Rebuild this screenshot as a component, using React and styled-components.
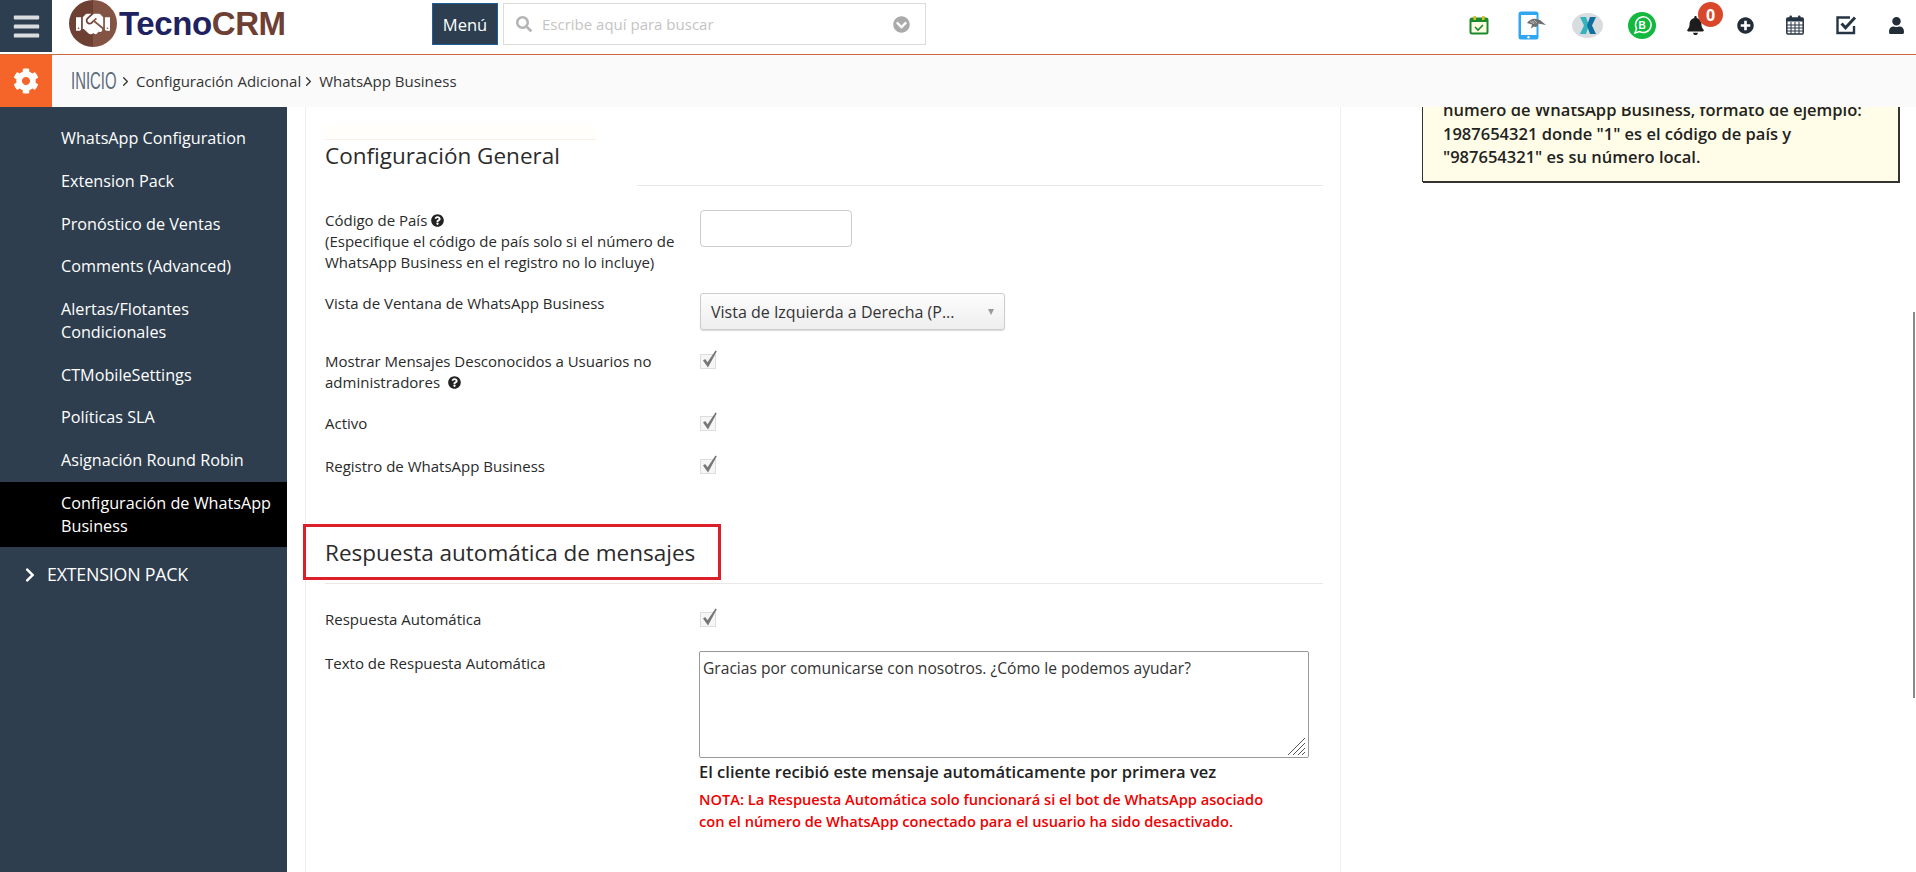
import React from 'react';
import styled, { createGlobalStyle } from 'styled-components';
import {
    FaBars, FaCog, FaSearch, FaChevronCircleDown, FaQuestionCircle, FaBell,
    FaPlusCircle, FaUser, FaChevronRight, FaHandshake,
} from 'react-icons/fa';
import { FiChevronRight } from 'react-icons/fi';

const GlobalStyle = createGlobalStyle`
    html, body {
        margin: 0;
        padding: 0;
        background: #fff;
        font-family: "Open Sans", "Liberation Sans", sans-serif;
        color: #222;
    }
`;

const menuItems = [
    'WhatsApp Configuration',
    'Extension Pack',
    'Pronóstico de Ventas',
    'Comments (Advanced)',
    'Alertas/Flotantes Condicionales',
    'CTMobileSettings',
    'Políticas SLA',
    'Asignación Round Robin',
];

const CalendarCheck = () => (
    <svg width="20" height="20" viewBox="0 0 20 20" fill="none">
        <rect x="1.5" y="3.5" width="17" height="15" rx="1.5" fill="#fdfbe0" stroke="#1b8a2e" strokeWidth="2" />
        <rect x="1.5" y="3.5" width="17" height="3.5" fill="#1b8a2e" />
        <rect x="4.5" y="1" width="2.5" height="4" fill="#d8c021" />
        <rect x="13" y="1" width="2.5" height="4" fill="#d8c021" />
        <path d="M6 12l3 3 5-5" stroke="#1b8a2e" strokeWidth="1.6" />
    </svg>
);

const TabletBird = () => (
    <svg width="29" height="29" viewBox="0 0 29 29" fill="none">
        <rect x="0.5" y="0.5" width="20" height="28" rx="2.5" fill="#2ea6f2" />
        <rect x="3" y="4" width="15.5" height="20" fill="#fff" />
        <circle cx="10.5" cy="26.2" r="1.2" fill="#fff" />
        <path d="M9 12c2-3 6-5 9-4l4 1 6 5-8-1.5c0 3-2 4-4 3l-3 2 1-4-5-1.5z" fill="#6f6f6f" />
        <path d="M12 10.5l4 2M14 9.5l3 3M16 9l3 3" stroke="#ddd" strokeWidth=".7" />
    </svg>
);

const XLogo = () => (
    <svg width="31" height="25" viewBox="0 0 31 25">
        <ellipse cx="15.5" cy="12.5" rx="15.5" ry="12.5" fill="#d9dcdf" />
        <path d="M8 4h6l3 8.5-3 8.5H8l4-8.5z" fill="#33b3bd" />
        <path d="M24 4h-6l-3 8.5 3 8.5h6l-4-8.5z" fill="#0f6f9d" />
    </svg>
);

const WaBusiness = () => (
    <svg width="28" height="27" viewBox="0 0 28 27" fill="none">
        <ellipse cx="14" cy="13.5" rx="14" ry="13.5" fill="#13b83e" />
        <path d="M7 21l1.5-4.5a7.8 7.8 0 1 1 3 3z" stroke="#fff" strokeWidth="1.5" />
        <text x="14.2" y="17" textAnchor="middle" fontSize="10" fontWeight="700" fontFamily="Liberation Sans" fill="#fff">B</text>
    </svg>
);

const CalendarGrid = () => (
    <svg width="18" height="20" viewBox="0 0 18 20" fill="none">
        <rect x="0.8" y="3" width="16.4" height="16" rx="1" fill="#fff" stroke="#263544" strokeWidth="1.5" />
        <rect x="0.8" y="3" width="16.4" height="3.5" fill="#263544" />
        <path d="M1 10h16M1 13h16M1 16h16M5 7v12M9 7v12M13 7v12" stroke="#263544" strokeWidth="1" />
        <rect x="3.5" y="0.5" width="2.5" height="4.5" rx="1" fill="#263544" />
        <rect x="12" y="0.5" width="2.5" height="4.5" rx="1" fill="#263544" />
    </svg>
);

const CheckSquare = () => (
    <svg width="21" height="20" viewBox="0 0 21 20" fill="none">
        <path d="M18 11v7H1.5V2.5H14" stroke="#263544" strokeWidth="2.4" />
        <path d="M5.5 8.5l4 4.2L19 2.5" stroke="#263544" strokeWidth="3" />
    </svg>
);

const Tick = () => (
    <svg width="17" height="20" viewBox="0 0 17 20">
        <path d="M2 10.5l2.2-1.5 2.3 3.2L14.5 0.5 15.8 1.2 7 17.5z" fill="#777" />
    </svg>
);

const ResizeGrip = () => (
    <svg width="20" height="19" viewBox="0 0 20 19" fill="none" stroke="#555" strokeWidth="1">
        <path d="M1 18L18 1M6 18L18 6M11 18l7-7M15 18l3-3" />
    </svg>
);

const App = () => {
    return (
        <>
            <GlobalStyle />
            <Page>
                <TopBar>
                    <MenuToggle><FaBars size={29} /></MenuToggle>
                    <Logo>
                        <LogoBadge><FaHandshake size={34} /></LogoBadge>
                        <LogoText>Tecno<span>CRM</span></LogoText>
                    </Logo>
                    <MenuButton>Menú</MenuButton>
                    <SearchBox>
                        <FaSearch size={16} color="#b5b5b5" />
                        <SearchInput placeholder="Escribe aquí para buscar" />
                        <FaChevronCircleDown size={17} color="#aaa" />
                    </SearchBox>
                    <Actions>
                        <ActionSlot $left={1469}><CalendarCheck /></ActionSlot>
                        <ActionSlot $left={1518}><TabletBird /></ActionSlot>
                        <ActionSlot $left={1572}><XLogo /></ActionSlot>
                        <ActionSlot $left={1628}><WaBusiness /></ActionSlot>
                        <ActionSlot $left={1686}>
                            <FaBell size={19} color="#1d1d1d" />
                            <Badge>0</Badge>
                        </ActionSlot>
                        <ActionSlot $left={1737}><FaPlusCircle size={17} color="#222d38" /></ActionSlot>
                        <ActionSlot $left={1786}><CalendarGrid /></ActionSlot>
                        <ActionSlot $left={1836}><CheckSquare /></ActionSlot>
                        <ActionSlot $left={1888}><FaUser size={17} color="#222d38" /></ActionSlot>
                    </Actions>
                </TopBar>
                <Breadcrumb>
                    <GearBlock><FaCog size={26} /></GearBlock>
                    <Home><HomeText>INICIO</HomeText></Home>
                    <FiChevronRight size={15} color="#333" />
                    <Crumb>Configuración Adicional</Crumb>
                    <FiChevronRight size={15} color="#333" />
                    <Crumb>WhatsApp Business</Crumb>
                </Breadcrumb>
                <Body>
                    <Sidebar>
                        {menuItems.map((item) => (
                            <MenuItem key={item}>{item}</MenuItem>
                        ))}
                        <MenuItem $active>Configuración de WhatsApp Business</MenuItem>
                        <MenuGroup><FaChevronRight size={16} />EXTENSION PACK</MenuGroup>
                    </Sidebar>
                    <Panel>
                        <SectionTitle $faded>Configuración General</SectionTitle>
                        <FormRow $height={83}>
                            <Label>
                                Código de País <QuestionIcon size={13} /><br />
                                (Especifique el código de país solo si el número de WhatsApp Business en el registro no lo incluye)
                            </Label>
                            <TextInput />
                        </FormRow>
                        <FormRow $height={58}>
                            <Label>Vista de Ventana de WhatsApp Business</Label>
                            <SelectBox>
                                Vista de Izquierda a Derecha (P...
                                <Caret />
                            </SelectBox>
                        </FormRow>
                        <FormRow $height={62}>
                            <Label>Mostrar Mensajes Desconocidos a Usuarios no administradores <QuestionIcon size={13} $gap /></Label>
                            <CheckBox><Tick /></CheckBox>
                        </FormRow>
                        <FormRow $height={43}>
                            <Label>Activo</Label>
                            <CheckBox><Tick /></CheckBox>
                        </FormRow>
                        <FormRow $height={80}>
                            <Label>Registro de WhatsApp Business</Label>
                            <CheckBox><Tick /></CheckBox>
                        </FormRow>
                        <SectionTitle $boxed>Respuesta automática de mensajes</SectionTitle>
                        <FormRow $height={44}>
                            <Label>Respuesta Automática</Label>
                            <CheckBox><Tick /></CheckBox>
                        </FormRow>
                        <FormRow>
                            <Label>Texto de Respuesta Automática</Label>
                            <ReplyColumn>
                                <TextareaWrap>
                                    <ReplyText defaultValue="Gracias por comunicarse con nosotros. ¿Cómo le podemos ayudar?" />
                                    <GripSlot><ResizeGrip /></GripSlot>
                                </TextareaWrap>
                                <ReplyHint>El cliente recibió este mensaje automáticamente por primera vez</ReplyHint>
                                <ReplyNote>NOTA: La Respuesta Automática solo funcionará si el bot de WhatsApp asociado con el número de WhatsApp conectado para el usuario ha sido desactivado.</ReplyNote>
                            </ReplyColumn>
                        </FormRow>
                    </Panel>
                    <NoteColumn>
                        <NoteBox>
                            número de WhatsApp Business, formato de ejemplo: 1987654321 donde "1" es el código de país y "987654321" es su número local.
                        </NoteBox>
                    </NoteColumn>
                </Body>
                <ScrollThumb />
            </Page>
        </>
    );
};
export default App;

const Page = styled.div`
    width: 1916px;
    height: 872px;
    overflow: hidden;
    display: flex;
    flex-direction: column;
    position: relative;
`;

const ScrollThumb = styled.div`
    position: absolute;
    right: 1px;
    top: 312px;
    width: 2px;
    height: 386px;
    background: #8a8a8a;
`;

const TopBar = styled.header`
    height: 54px;
    flex: none;
    display: flex;
    align-items: flex-start;
    position: relative;
    background: #fff;
    border-bottom: 1px solid #c96a3e;
`;

const MenuToggle = styled.div`
    width: 52px;
    height: 52px;
    background: #2c3e50;
    color: #d9dde0;
    display: flex;
    align-items: center;
    justify-content: center;
`;

const Logo = styled.div`
    width: 380px;
    padding-left: 17px;
    display: flex;
    align-items: center;
    gap: 2px;
    box-sizing: border-box;
`;

const LogoBadge = styled.div`
    width: 48px;
    height: 47px;
    border-radius: 50%;
    background: linear-gradient(90deg, #6e4034 50%, #835344 50%);
    color: #fff;
    display: flex;
    align-items: center;
    justify-content: center;
`;

const LogoText = styled.div`
    font-family: "Liberation Sans", sans-serif;
    font-weight: 700;
    font-size: 33px;
    letter-spacing: -0.4px;
    color: #1f2260;

    span {
        color: #6e4034;
    }
`;

const MenuButton = styled.button`
    width: 66px;
    height: 42px;
    margin-top: 3px;
    padding: 0;
    background: #2c3e50;
    border: 1px solid #1c5fa0;
    color: #fff;
    font-family: inherit;
    font-size: 16.5px;
`;

const SearchBox = styled.div`
    width: 423px;
    height: 42px;
    margin: 3px 0 0 5px;
    padding: 0 15px 0 12px;
    box-sizing: border-box;
    border: 1px solid #dcdcdc;
    display: flex;
    align-items: center;
    gap: 10px;
`;

const SearchInput = styled.input`
    flex: 1;
    min-width: 0;
    border: none;
    outline: none;
    padding: 0;
    font-family: inherit;
    font-size: 15px;

    &::placeholder {
        color: #c4c4c4;
    }
`;

const Actions = styled.div`
    flex: 1;
`;

const ActionSlot = styled.div`
    position: absolute;
    left: ${(p) => p.$left}px;
    top: 0;
    height: 50px;
    display: flex;
    align-items: center;
`;

const Badge = styled.span`
    position: absolute;
    left: 12px;
    top: 2px;
    width: 25px;
    height: 25px;
    border-radius: 50%;
    background: #d9472b;
    color: #fff;
    font-size: 16px;
    font-weight: 700;
    display: flex;
    align-items: center;
    justify-content: center;
`;

const Breadcrumb = styled.nav`
    height: 52px;
    flex: none;
    background: #fafafa;
    display: flex;
    align-items: center;
    color: #333;
    font-size: 15px;
    position: relative;
    z-index: 1;
`;

const GearBlock = styled.div`
    width: 52px;
    height: 52px;
    margin-right: 19px;
    background: #f56428;
    color: #fff;
    display: flex;
    align-items: center;
    justify-content: center;
`;

const Home = styled.span`
    width: 45px;
    margin-right: 2px;
`;

const HomeText = styled.span`
    display: inline-block;
    font-family: "Liberation Sans", sans-serif;
    font-size: 24px;
    color: #5c6b7a;
    transform: scaleX(0.62);
    transform-origin: left center;
`;

const Crumb = styled.span`
    margin: 0 0 0 3px;
`;

const Body = styled.div`
    flex: 1;
    min-height: 0;
    display: flex;
`;

const Sidebar = styled.aside`
    width: 287px;
    flex: none;
    background: #2e3e4e;
    padding-top: 10.5px;
    box-sizing: border-box;
`;

const MenuItem = styled.div`
    padding: 9.83px 8px 9.83px 61px;
    font-size: 16.2px;
    line-height: 23px;
    color: #fff;
    background: ${(p) => (p.$active ? '#000' : 'transparent')};
`;

const MenuGroup = styled.div`
    padding: 16px 0 0 22px;
    display: flex;
    align-items: center;
    gap: 9px;
    font-size: 17.8px;
    line-height: 23px;
    color: #fff;
    letter-spacing: -0.2px;
`;

const Panel = styled.main`
    width: 1036px;
    margin-left: 18px;
    padding: 0 17px 0 19px;
    box-sizing: border-box;
    flex: none;
    border-left: 1px solid #eee;
    border-right: 1px solid #eee;
`;

const SectionTitle = styled.h2`
    margin: ${(p) => (p.$boxed ? '0 0 25px' : '32px 0 24px')};
    font-size: 22.5px;
    font-weight: 400;
    line-height: 34px;
    color: #2b2b2b;
    padding-bottom: ${(p) => (p.$boxed ? '13px' : '12px')};
    border-bottom: 1px solid #e8e8e8;
    position: relative;

    ${(p) => p.$faded && `
        &::before {
            content: '';
            position: absolute;
            left: 0;
            top: -14px;
            width: 271px;
            height: 14px;
            background: #fffefa;
            border-bottom: 1px solid #fdeee8;
        }
        &::after {
            content: '';
            position: absolute;
            left: 0;
            bottom: -1px;
            width: 312px;
            height: 1px;
            background: #fff;
        }
    `}

    ${(p) => p.$boxed && `
        &::before {
            content: '';
            position: absolute;
            left: -22px;
            top: -12px;
            width: 412px;
            height: 50px;
            border: 3px solid #dd1f29;
        }
    `}
`;

const FormRow = styled.div`
    display: grid;
    grid-template-columns: 375px 1fr;
    min-height: ${(p) => (p.$height ? `${p.$height}px` : 'auto')};
    align-content: start;
`;

const Label = styled.div`
    font-size: 15px;
    line-height: 21px;
    color: #2a2a2a;
    padding-right: 18px;
`;

const QuestionIcon = styled(FaQuestionCircle)`
    color: #222;
    vertical-align: -1px;
    margin-left: ${(p) => (p.$gap ? '4px' : '0')};
`;

const TextInput = styled.input`
    width: 152px;
    height: 37px;
    box-sizing: border-box;
    border: 1px solid #ccc;
    border-radius: 4px;
    outline: none;
`;

const SelectBox = styled.div`
    width: 305px;
    height: 37px;
    box-sizing: border-box;
    padding: 0 10px;
    border: 1px solid #ccc;
    border-radius: 3px;
    background: linear-gradient(#fdfdfd, #eee);
    box-shadow: 0 1px 1px rgba(0, 0, 0, 0.15);
    font-size: 16px;
    color: #333;
    display: flex;
    align-items: center;
    justify-content: space-between;
`;

const Caret = styled.span`
    width: 0;
    height: 0;
    border-left: 3.5px solid transparent;
    border-right: 3.5px solid transparent;
    border-top: 6px solid #999;
`;

const CheckBox = styled.div`
    width: 16px;
    height: 15px;
    margin-top: 3px;
    box-sizing: border-box;
    border: 1px solid #ddd;
    background: #f6f6f6;
    position: relative;

    svg {
        position: absolute;
        left: 0;
        top: -5px;
    }
`;

const ReplyColumn = styled.div`
    margin: -2px 0 0 -1px;
    width: 610px;
`;

const TextareaWrap = styled.div`
    position: relative;
`;

const GripSlot = styled.div`
    position: absolute;
    right: 2px;
    bottom: 2px;
    height: 19px;
    pointer-events: none;
`;

const ReplyText = styled.textarea`
    display: block;
    width: 610px;
    height: 107px;
    box-sizing: border-box;
    padding: 5px 3px;
    border: 1px solid #999;
    border-radius: 2px;
    outline: none;
    resize: none;
    font-family: inherit;
    font-size: 15.6px;
    color: #333;
`;

const ReplyHint = styled.div`
    margin-top: 2px;
    font-size: 16.5px;
    font-weight: 600;
    line-height: 23px;
    color: #222;
`;

const ReplyNote = styled.div`
    margin-top: 5px;
    width: 590px;
    font-size: 14.65px;
    font-weight: 600;
    line-height: 22px;
    color: #f00000;
`;

const NoteColumn = styled.div`
    flex: 1;
    padding-left: 81px;
    overflow: hidden;
`;

const NoteBox = styled.div`
    width: 477px;
    margin-top: -9px;
    box-sizing: border-box;
    padding: 0 18px 12px 20px;
    background: #fffde8;
    border: 1px solid #333;
    border-top: none;
    box-shadow: 1px 1px 0 #333;
    font-size: 16.5px;
    font-weight: 600;
    line-height: 23.5px;
    color: #222;
`;
